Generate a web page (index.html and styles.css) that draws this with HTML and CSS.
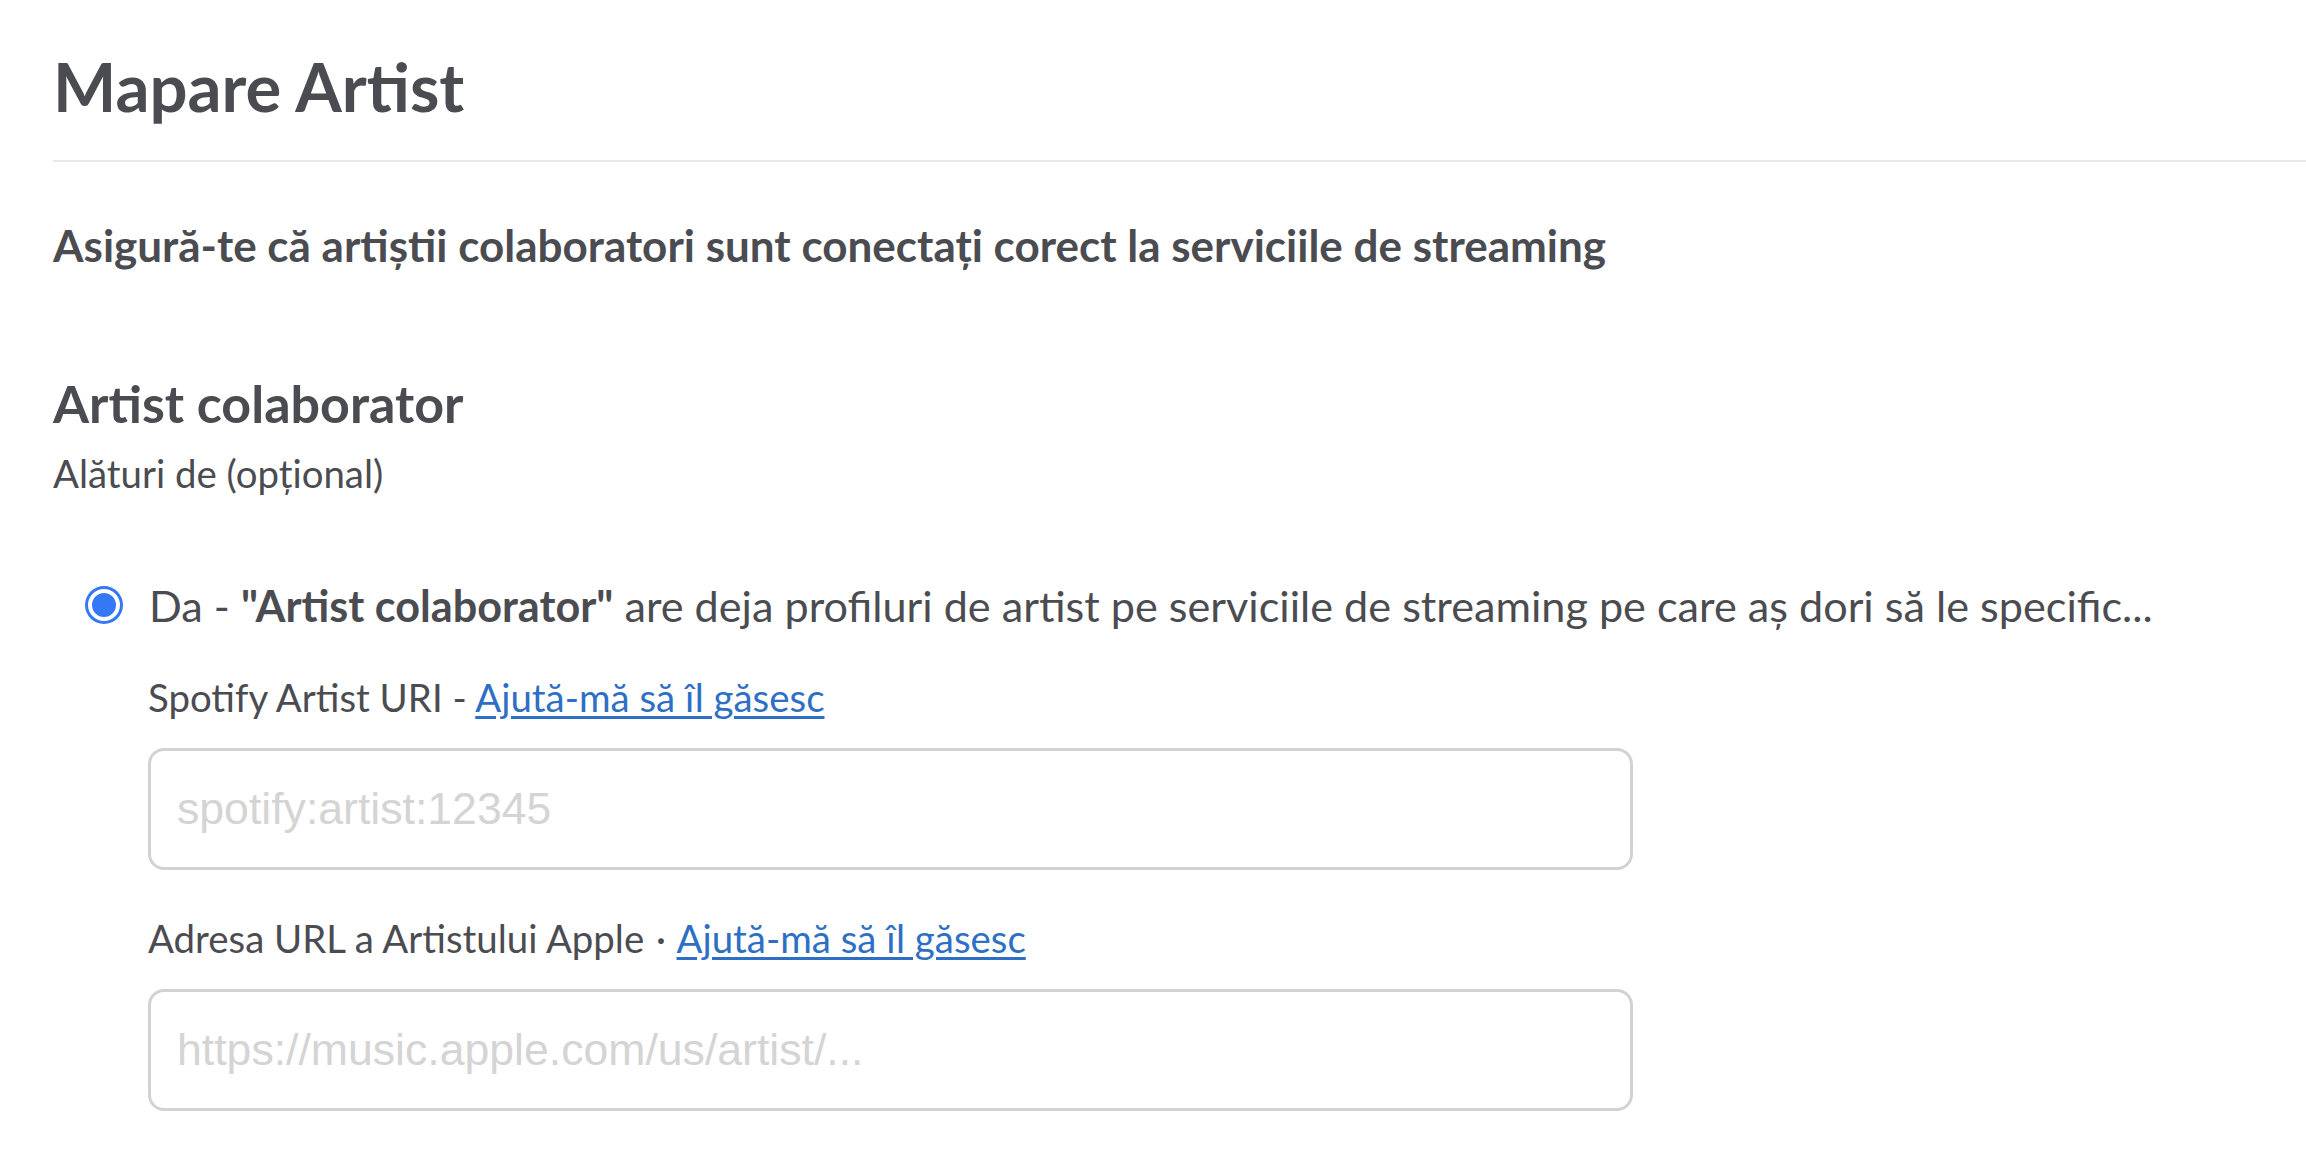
FILE: index.html
```html
<!DOCTYPE html>
<html lang="ro">
<head>
    <meta charset="UTF-8">
    <meta name="viewport" content="width=device-width, initial-scale=1.0">
    <title>Mapare Artist</title>
    <link rel="stylesheet" href="styles.css">
</head>
<body>
    <div class="page">
        <h1 class="title">Mapare Artist</h1>
        <hr class="divider">

        <p class="lead">Asigură-te că artiștii colaboratori sunt conectați corect la serviciile de streaming</p>

        <div class="artist">
            <h2 class="artist_name">Artist colaborator</h2>
            <p class="artist_role">Alături de (opțional)</p>

            <label class="option">
                <span class="radio"></span>
                <span class="option_text">Da - <b>"Artist colaborator"</b> are deja profiluri de artist pe serviciile de streaming pe care aș dori să le specific...</span>
            </label>

            <div class="fields">
                <div class="field">
                    <p class="field_label">Spotify Artist URI - <a href="#">Ajută-mă să îl găsesc</a></p>
                    <input type="text" class="field_input" placeholder="spotify:artist:12345">
                </div>
                <div class="field">
                    <p class="field_label">Adresa URL a Artistului Apple <span class="dot">·</span> <a href="#">Ajută-mă să îl găsesc</a></p>
                    <input type="text" class="field_input" placeholder="https://music.apple.com/us/artist/...">
                </div>
            </div>
        </div>
    </div>
</body>
</html>
```

FILE: styles.css
```css
* {
    margin: 0;
    padding: 0;
    box-sizing: border-box;
}

body {
    background: #fff;
    color: #4b4c51;
    font-family: Lato, "Noto Sans", sans-serif;
    overflow: hidden;
}

.page {
    padding: 46px 0 0 53px;
}

.title {
    font-size: 67px;
    line-height: 80px;
    font-weight: 700;
}

.divider {
    border: none;
    height: 2px;
    background: #e7e7e9;
    margin-top: 34px;
}

.lead {
    margin-top: 57px;
    font-size: 44px;
    line-height: 52px;
    font-weight: 700;
}

.artist {
    margin-top: 100px;
}

.artist_name {
    font-size: 52px;
    line-height: 64px;
    font-weight: 700;
}

.artist_role {
    margin-top: 15px;
    font-size: 38.4px;
    line-height: 46px;
}

.option {
    display: flex;
    align-items: center;
    gap: 26px;
    margin-top: 83px;
    margin-left: 32px;
    font-size: 43.2px;
    line-height: 52px;
}

.option b {
    font-weight: 700;
}

/* radio bifat: inel albastru, spatiu alb, punct albastru */
.radio {
    flex: none;
    width: 32px;
    height: 32px;
    border-radius: 50%;
    background: #3478f6;
    border: 4px solid #fff;
    box-shadow: 0 0 0 3px #3478f6;
    margin: 0 3px;
}

.fields {
    padding-left: 95px;
    width: 1580px;
}

.field {
    margin-top: 43px;
}

.field + .field {
    margin-top: 45px;
}

.field_label {
    font-size: 38.4px;
    line-height: 46px;
}

.field_label .dot {
    padding: 0 2px;
}

.field_label a {
    color: #2e6fc6;
    text-decoration: underline;
    text-underline-offset: 4px;
}

.field_input {
    display: block;
    width: 100%;
    height: 122px;
    margin-top: 28px;
    padding: 0 26px;
    border: 3px solid #d2d2d2;
    border-radius: 16px;
    font-family: "Liberation Sans", Arial, sans-serif;
    font-size: 44.6px;
    color: #333;
    outline: none;
}

.field_input::placeholder {
    color: #d4d4d4;
}
```
